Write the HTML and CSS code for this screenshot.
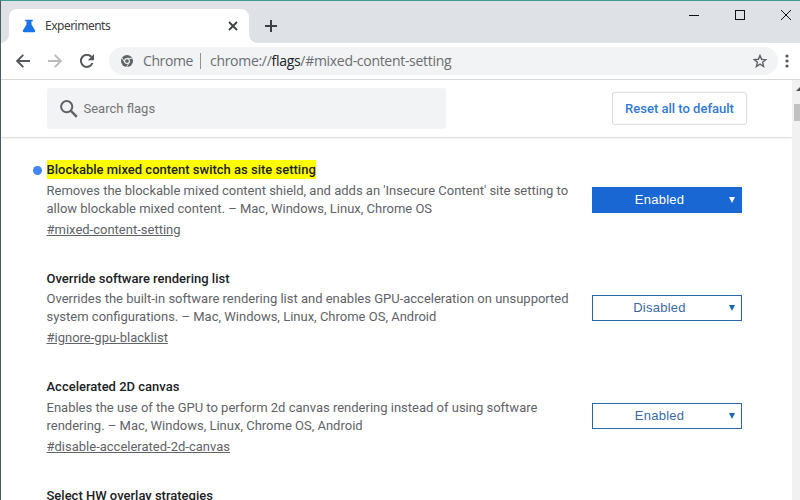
FILE: index.html
```html
<!DOCTYPE html>
<html lang="en">
<head>
<meta charset="utf-8">
<title>Experiments</title>
<link rel="stylesheet" href="styles.css">
</head>
<body>
<div class="window">
  <header class="tabstrip">
    <div class="tab">
      <svg class="flask" width="14" height="14" viewBox="0 0 14 14"><path fill="#1a73e8" d="M3.2 0.8H10.8V2.2H9.5V5.5L13 11.2Q13.8 13.2 12 13.3H2Q0.2 13.2 1 11.2L4.5 5.5V2.2H3.2Z"/></svg>
      <span class="tab-title">Experiments</span>
      <svg class="tab-close" width="10" height="10" viewBox="0 0 10 10"><path d="M1 1L9 9M9 1L1 9" stroke="#3c4043" stroke-width="1.8"/></svg>
    </div>
    <svg class="new-tab" width="12" height="12" viewBox="0 0 12 12"><path d="M6 0V12M0 6H12" stroke="#3c4043" stroke-width="2"/></svg>
    <div class="controls">
      <svg width="10" height="10" viewBox="0 0 10 10"><path d="M0 5.5H10" stroke="#111"/></svg>
      <svg width="10" height="10" viewBox="0 0 10 10"><rect x=".5" y=".5" width="9" height="9" fill="none" stroke="#111"/></svg>
      <svg width="10" height="10" viewBox="0 0 10 10"><path d="M0 0L10 10M10 0L0 10" stroke="#111"/></svg>
    </div>
  </header>
  <nav class="toolbar">
    <svg class="nav-icon" width="14" height="14" viewBox="0 0 14 14"><path d="M14 7H1.5M7.3 0.8L1.2 7L7.3 13.2" fill="none" stroke="#54585d" stroke-width="1.9"/></svg>
    <svg class="nav-icon" width="14" height="14" viewBox="0 0 14 14"><path d="M0 7H12.5M6.7 0.8L12.8 7L6.7 13.2" fill="none" stroke="#b9bbbe" stroke-width="1.9"/></svg>
    <svg class="nav-icon" width="14" height="14" viewBox="0 0 14 14"><path d="M12.5 9A6 6 0 1 1 11.4 2.9" fill="none" stroke="#54585d" stroke-width="2"/><path d="M14 0V6.2H7.8Z" fill="#54585d"/></svg>
    <div class="omnibox">
      <svg class="chrome-icon" width="12" height="12" viewBox="0 0 12 12"><circle cx="6" cy="6" r="6" fill="#5f6368"/><path d="M6 3.3H11.6M3.7 7.4L1 2.6M8.3 7.4L5.6 12" stroke="#f1f3f4" stroke-width=".9"/><circle cx="6" cy="6" r="2.4" fill="#5f6368" stroke="#f1f3f4" stroke-width="1.1"/></svg>
      <span class="origin">Chrome</span>
      <span class="divider"></span>
      <span class="url">chrome://<b>flags</b>/#mixed-content-setting</span>
      <svg class="star" width="14" height="14" viewBox="0 0 14 14"><path d="M7 1.4L8.6 5.3L12.8 5.6L9.6 8.3L10.6 12.5L7 10.2L3.4 12.5L4.4 8.3L1.2 5.6L5.4 5.3Z" fill="none" stroke="#5f6368" stroke-width="1.4"/></svg>
    </div>
    <svg class="menu" width="4" height="14" viewBox="0 0 4 14"><g fill="#54585d"><circle cx="2" cy="2" r="1.6"/><circle cx="2" cy="7" r="1.6"/><circle cx="2" cy="12" r="1.6"/></g></svg>
  </nav>
  <div class="viewport">
    <main class="page">
      <div class="search-bar">
        <div class="search">
          <svg width="18" height="18" viewBox="0 0 18 18"><circle cx="6.7" cy="6.7" r="5.6" fill="none" stroke="#5f6368" stroke-width="2"/><path d="M10.7 10.7L16.8 16.8" stroke="#5f6368" stroke-width="2.4"/></svg>
          <span>Search flags</span>
        </div>
        <div class="reset">Reset all to default</div>
      </div>
      <div class="flags">
        <section class="flag changed">
          <div class="text">
            <h2><mark>Blockable mixed content switch as site setting</mark></h2>
            <p>Removes the blockable mixed content shield, and adds an 'Insecure Content' site setting to<br>allow blockable mixed content. – Mac, Windows, Linux, Chrome OS</p>
            <a>#mixed-content-setting</a>
          </div>
          <div class="select filled"><span>Enabled</span><i></i></div>
        </section>
        <section class="flag">
          <div class="text">
            <h2>Override software rendering list</h2>
            <p>Overrides the built-in software rendering list and enables GPU-acceleration on unsupported<br>system configurations. – Mac, Windows, Linux, Chrome OS, Android</p>
            <a>#ignore-gpu-blacklist</a>
          </div>
          <div class="select"><span>Disabled</span><i></i></div>
        </section>
        <section class="flag">
          <div class="text">
            <h2>Accelerated 2D canvas</h2>
            <p>Enables the use of the GPU to perform 2d canvas rendering instead of using software<br>rendering. – Mac, Windows, Linux, Chrome OS, Android</p>
            <a>#disable-accelerated-2d-canvas</a>
          </div>
          <div class="select"><span>Enabled</span><i></i></div>
        </section>
        <section class="flag">
          <div class="text"><h2>Select HW overlay strategies</h2></div>
        </section>
      </div>
    </main>
    <div class="scrollbar"><svg width="6" height="4" viewBox="0 0 6 4"><path d="M0 4L4 0L8 4Z" fill="#505050"/></svg><div class="thumb"></div></div>
  </div>
</div>
</body>
</html>
```

FILE: styles.css
```css
* { box-sizing: border-box; }
body { margin: 0; background: #fff; font-family: Roboto, sans-serif; }
svg { display: block; flex: none; }
.window {
  width: 800px; height: 500px; overflow: hidden;
  display: flex; flex-direction: column;
  border-top: 1px solid #3f9c8c; border-left: 1px solid #4b5b60;
}
.tabstrip { flex: none; height: 42px; display: flex; background: #dee1e6; padding-left: 8px; }
.tab {
  position: relative; width: 240px; height: 34px; margin-top: 8px;
  background: #fff; border-radius: 8px 8px 0 0;
  display: flex; align-items: center; padding: 0 11px 0 13px;
}
.tab::before, .tab::after { content: ""; position: absolute; bottom: 0; width: 8px; height: 8px; }
.tab::before { left: -8px; background: radial-gradient(circle at 0 0, transparent 7.5px, #fff 8px); }
.tab::after { right: -8px; background: radial-gradient(circle at 100% 0, transparent 7.5px, #fff 8px); }
.tab-title { flex: 1; margin-left: 9px; font: 12px/16px "Noto Sans", "Open Sans", sans-serif; letter-spacing: -.5px; color: #3c4043; }
.new-tab { margin: 19px 0 0 16px; }
.controls { margin-left: auto; padding: 9px 9px 0 0; display: flex; gap: 36px; }
.toolbar {
  flex: none; height: 37px; display: flex; align-items: center;
  padding-left: 15px; border-bottom: 1px solid #d6d8da;
}
.nav-icon { margin-right: 18px; }
.omnibox {
  width: 669px; height: 28px; margin-left: -3px; border-radius: 14px; background: #f1f3f4;
  display: flex; align-items: center; padding: 0 11px 0 12px;
  font: 14px/20px "Open Sans", sans-serif; color: #6a6e73; white-space: nowrap;
}
.origin { margin-left: 10px; letter-spacing: -.4px; width: 49px; }
.divider { width: 1px; height: 16px; margin: 0 9px 0 8px; background: #909396; }
.url { letter-spacing: -.3px; }
.url b { font-weight: 400; color: #202124; }
.star { margin-left: auto; }
.menu { margin-left: 7px; }
.viewport { flex: 1; min-height: 0; display: flex; }
.page { flex: 1; min-width: 0; overflow: hidden; }
.search-bar {
  height: 57px; padding: 8px 45px 0 46px; display: flex; justify-content: space-between; align-items: flex-start;
  box-shadow: 0 1px 2px rgba(0,0,0,.17);
}
.search {
  width: 399px; height: 41px; border-radius: 3px; background: #f1f3f4;
  display: flex; align-items: center; gap: 5.5px; padding-left: 13px; font-size: 13px; color: #757575;
}
.reset {
  width: 135px; height: 33px; margin-top: 4px; border: 1px solid #dadce0; border-radius: 3px;
  text-align: center; font-size: 13px; line-height: 32px; font-weight: 500; color: #3079d8;
}
.flags { padding: 23px 50px 0 45.5px; }
.flag { position: relative; height: 108.5px; display: flex; justify-content: space-between; align-items: flex-start; }
.changed::before {
  content: ""; position: absolute; left: -13.5px; top: 6px; width: 9px; height: 9px;
  border-radius: 50%; background: #4285f4;
}
.text { font-size: 13px; line-height: 18px; color: #5f6368; white-space: nowrap; }
h2 { margin: 0 0 2.5px; font-size: 13px; line-height: 19px; font-weight: 500; color: #202124; }
mark { display: inline-block; background: #ff0; color: #202124; }
p { margin: 0; }
a { display: block; margin-top: 3px; text-decoration: underline; }
.select {
  flex: none; width: 150px; height: 26px; margin-top: 26.5px; border: 1px solid #2b66a9;
  display: flex; align-items: center; color: #3c68a8;
  font: 13px/24px "Liberation Sans", sans-serif;
}
.select:not(.filled) { margin-top: 26.45px; }
.select span { flex: 1; text-align: center; padding-right: 3px; letter-spacing: .25px; }
.select i { margin: 0 6px 0 0; border: solid transparent; border-width: 6px 3px 0; border-top-color: #1967b8; }
.filled { background: #1967d2; border-color: #1967d2; color: #fff; }
.filled i { border-top-color: #fff; }
.scrollbar { width: 8px; background: #f1f1f1; padding: 7px 0 0 2px; }
.scrollbar svg { margin-left: 2px; }
.thumb { height: 17px; margin-top: 13px; background: #c1c1c1; }
```
